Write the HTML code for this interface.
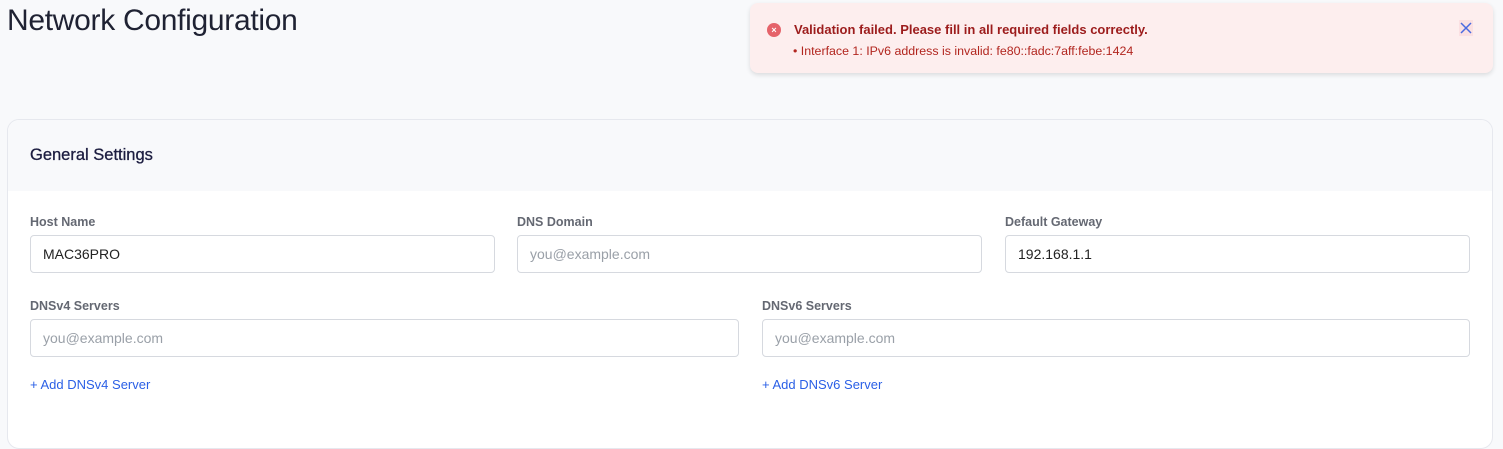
<!DOCTYPE html>
<html><head><style>
*{box-sizing:border-box;margin:0;padding:0}
body{width:1503px;height:401px;overflow:hidden;background:#f8f9fb;font-family:"Liberation Sans",sans-serif;position:relative}
h1{position:absolute;left:7px;top:4px;font-size:30px;font-weight:400;color:#1f2233;letter-spacing:-0.3px}
.toast{position:absolute;left:750px;top:3px;width:743px;height:70px;background:#fdeeee;border-radius:8px;box-shadow:0 2px 5px rgba(0,0,0,.12)}
.toast .ic{position:absolute;left:17px;top:20px;width:14px;height:14px;border-radius:50%;background:#e5636a;color:#fff;font-size:9px;line-height:14px;text-align:center;font-weight:700}
.toast .t1{position:absolute;left:44px;top:19px;font-size:13px;font-weight:700;color:#9c1c1c}
.toast .t2{position:absolute;left:43px;top:41px;font-size:12.4px;color:#b2261f}
.toast .x{position:absolute;left:709px;top:17px;width:14px;height:16px;background:#fbe0e2}
.card{position:absolute;left:7px;top:119px;width:1486px;height:330px;background:#fff;border:1px solid #e6e8ee;border-radius:12px;overflow:hidden}
.hd{height:71px;background:#f8f9fb;padding:26px 0 0 22px;font-size:16.5px;color:#1c1d40;-webkit-text-stroke:0.3px #1c1d40}
.lb{position:absolute;font-size:12.5px;color:#4a4e5a;font-weight:700;opacity:.85}
.in{position:absolute;height:38px;border:1px solid #d6d9df;border-radius:4px;font-size:14px;padding:10px 12px;color:#222}
.ph{color:#9aa0a8}
.lk{position:absolute;font-size:13px;color:#2a5fe6}
</style></head><body>
<h1>Network Configuration</h1>
<div class="toast"><div class="ic">×</div><div class="t1">Validation failed. Please fill in all required fields correctly.</div><div class="t2">• Interface 1: IPv6 address is invalid: fe80::fadc:7aff:febe:1424</div>
<svg class="x" viewBox="0 0 14 16"><path d="M2 3L12 13M12 3L2 13" stroke="#4a6ae0" stroke-width="1.5"/></svg></div>
<div class="card"><div class="hd">General Settings</div>
<div class="lb" style="left:22px;top:95px">Host Name</div>
<div class="in" style="left:22px;top:115px;width:465px">MAC36PRO</div>
<div class="lb" style="left:509px;top:95px">DNS Domain</div>
<div class="in ph" style="left:509px;top:115px;width:465px">you@example.com</div>
<div class="lb" style="left:997px;top:95px">Default Gateway</div>
<div class="in" style="left:997px;top:115px;width:465px">192.168.1.1</div>
<div class="lb" style="left:22px;top:179px">DNSv4 Servers</div>
<div class="in ph" style="left:22px;top:199px;width:709px">you@example.com</div>
<div class="lb" style="left:754px;top:179px">DNSv6 Servers</div>
<div class="in ph" style="left:754px;top:199px;width:708px">you@example.com</div>
<div class="lk" style="left:22px;top:257px">+ Add DNSv4 Server</div>
<div class="lk" style="left:754px;top:257px">+ Add DNSv6 Server</div>
</div>
</body></html>
